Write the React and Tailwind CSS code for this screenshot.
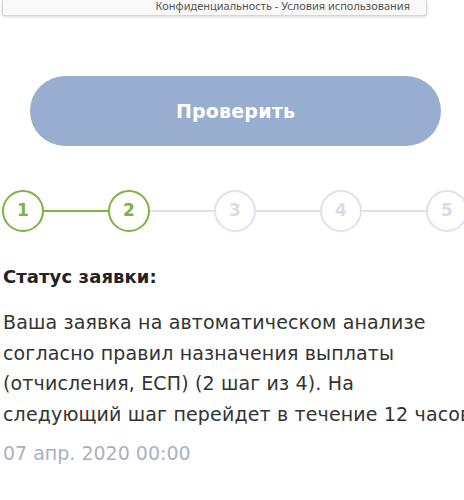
import React from 'react';

const steps = [1, 2, 3, 4, 5];
const done = 2;

const lines = [
    'Ваша заявка на автоматическом анализе',
    'согласно правил назначения выплаты',
    '(отчисления, ЕСП) (2 шаг из 4). На',
    'следующий шаг перейдет в течение 12 часов',
];

const App = () => {
    return (
        <div className="w-[464px] h-[500px] overflow-hidden bg-white font-['DejaVu_Sans',sans-serif]">
            {/* recaptcha footer */}
            <div className="ml-[2px] w-[425px] h-[16px] bg-[#f9f9f9] border border-t-0 border-[#d6d6d6] rounded-b-[3px] shadow-[0_1px_3px_rgba(0,0,0,0.15)] flex justify-end pr-[16px] overflow-hidden">
                <span className="font-['Noto_Sans',sans-serif] text-[11px] leading-[11px] text-[#555] whitespace-nowrap">
                    Конфиденциальность - Условия использования
                </span>
            </div>

            {/* button */}
            <button className="mt-[60px] ml-[30px] w-[411px] h-[70px] rounded-full bg-[#98aed0] text-white text-[19px] tracking-[0.2px] font-bold flex items-center justify-center">
                Проверить
            </button>

            {/* stepper */}
            <div className="mt-[44px] ml-[2px] w-[470px] flex items-center">
                {steps.map((s, i) => (
                    <React.Fragment key={s}>
                        {i > 0 && (
                            <div className={`h-[2px] w-[64px] ${s <= done ? 'bg-[#7cb342]' : 'bg-[#dfe2ee]'}`} />
                        )}
                        <div
                            className={`w-[42px] h-[42px] shrink-0 rounded-full border-[2.5px] flex items-center justify-center text-[17px] font-bold ${
                                s <= done ? 'border-[#7cb342] text-[#7cb342]' : 'border-[#dfe2ee] text-[#d9dce8]'
                            }`}
                        >
                            {s}
                        </div>
                    </React.Fragment>
                ))}
            </div>

            {/* status */}
            <div className="pl-[3px]">
                <h3 className="mt-[33px] text-[18px] tracking-[0.1px] leading-[24px] font-bold text-[#222]">Статус заявки:</h3>
                <div className="mt-[18px] text-[19px] tracking-[0.15px] leading-[30.5px] text-[#333]">
                    {lines.map((l) => (
                        <div key={l} className="whitespace-nowrap">{l}</div>
                    ))}
                </div>
                <p className="mt-[9px] text-[19px] leading-[30px] text-[#a9b1c3]">07 апр. 2020 00:00</p>
            </div>
        </div>
    );
};

export default App;
